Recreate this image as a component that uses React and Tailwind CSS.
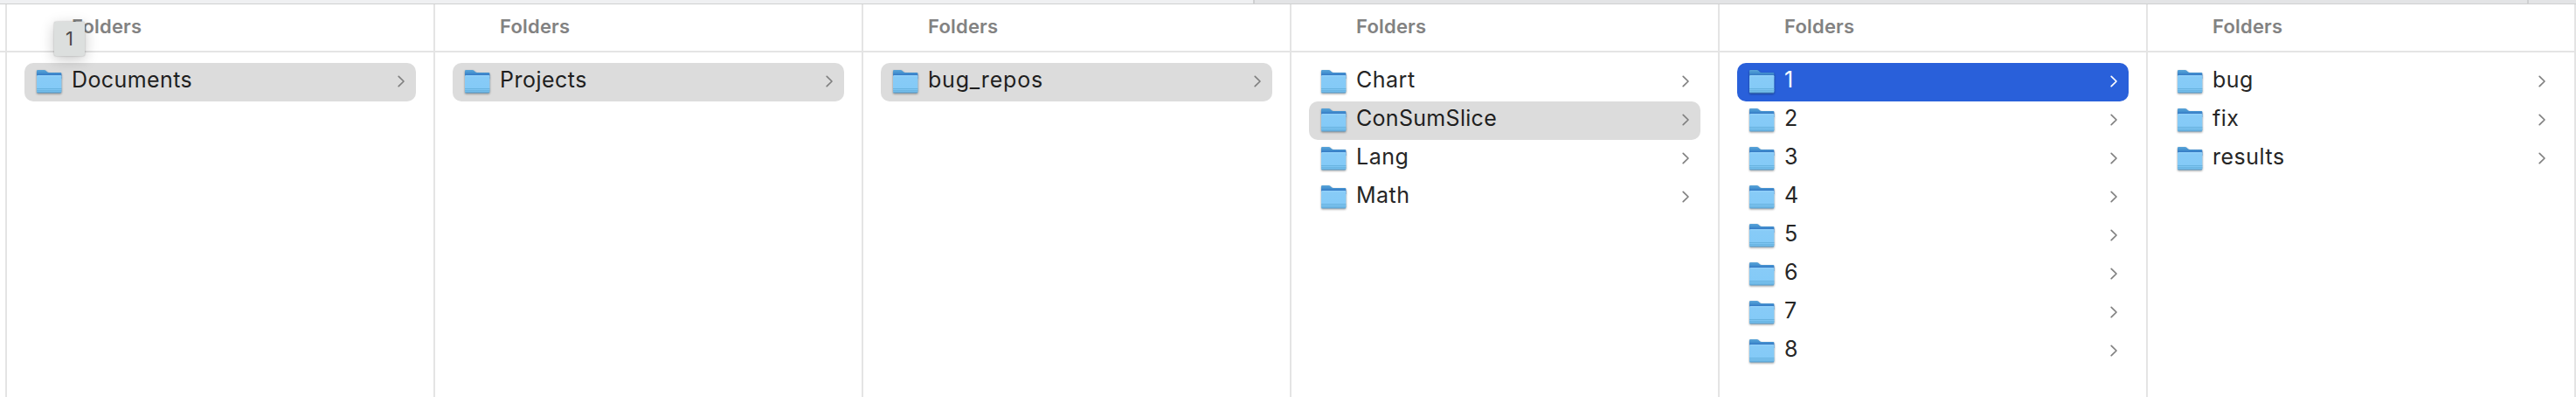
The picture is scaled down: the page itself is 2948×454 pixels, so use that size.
const columns = [
  { items: ['Documents'], selected: 0 },
  { items: ['Projects'], selected: 0 },
  { items: ['bug_repos'], selected: 0 },
  { items: ['Chart', 'ConSumSlice', 'Lang', 'Math'], selected: 1 },
  { items: ['1', '2', '3', '4', '5', '6', '7', '8'], selected: 0, active: true },
  { items: ['bug', 'fix', 'results'], selected: -1 },
];

const tracking = {
  bug_repos: 'tracking-[0.8px]',
  ConSumSlice: 'tracking-[0.3px]',
  Documents: 'tracking-[0.4px]',
};

function FolderIcon() {
  return (
    <svg width="33" height="32" viewBox="0 0 33 32" className="block shrink-0 drop-shadow-[0_1px_1px_rgba(0,0,0,0.4)]">
      <defs>
        <linearGradient id="folder-back" gradientUnits="userSpaceOnUse" x1="0" y1="2" x2="0" y2="8">
          <stop offset="0" stopColor="#5aa5d9" />
          <stop offset="0.6" stopColor="#4390cf" />
          <stop offset="1" stopColor="#3579c4" />
        </linearGradient>
        <linearGradient id="folder-front" x1="0" y1="0" x2="0" y2="1">
          <stop offset="0" stopColor="#93d1fa" />
          <stop offset="0.12" stopColor="#87cbf7" />
          <stop offset="0.7" stopColor="#84caf7" />
          <stop offset="1" stopColor="#74bdea" />
        </linearGradient>
      </defs>
      <path d="M2 3.2Q2 2 3.2 2H10.6Q11.7 2 12.5 2.8L14 4.2Q14.8 5 16 5H29.2Q30.4 5 30.4 6.2V12H2Z" fill="url(#folder-back)" />
      <path d="M2 9.2Q2 8 3.2 8H29.2Q30.4 8 30.4 9.2V27Q30.4 28.2 29.2 28.2H3.2Q2 28.2 2 27Z" fill="url(#folder-front)" />
      <path d="M2 23.5H30.4M2 25.7H30.4" stroke="#62addb" strokeWidth="0.8" />
      <path d="M2.4 27.8H30" stroke="#5197c6" strokeWidth="0.8" />
    </svg>
  );
}

function Row({ label, selected, active }) {
  const tone = selected ? (active ? 'bg-[#2960da] text-white' : 'bg-[#dcdcdc] text-[#1f1f1f]') : 'text-[#262626]';
  return (
    <li className={`flex h-11 items-center rounded-[10px] pl-3 pr-3 ${tone}`}>
      <FolderIcon />
      <span className={`grow pb-1.5 pl-[9px] text-[25px] leading-[38px] ${tracking[label] || 'tracking-[0.5px]'}`}>{label}</span>
      <svg width="10" height="16" viewBox="0 0 10 16" className={`mb-0.5 block shrink-0 ${selected && active ? 'text-white' : 'text-[#808080]'}`}>
        <path d="M2.2 2.4L8 8L2.2 13.6" fill="none" stroke="currentColor" strokeWidth="1.7" strokeLinecap="round" strokeLinejoin="round" />
      </svg>
    </li>
  );
}

function Column({ items, selected, active, badge }) {
  return (
    <section className="w-[490px] shrink-0 border-r-2 border-[#e4e4e4]">
      <header className="relative h-[55px] border-b-2 border-[#e4e4e4] pl-[74px]">
        <h2 className="text-[22px] font-semibold leading-[50px] tracking-[0.2px] text-[#828282]">Folders</h2>
        {badge && (
          <span className="absolute left-[54px] top-5 h-[39px] w-[35px] rounded-[2px] bg-[#dcdfde] text-center text-[22px] leading-[38px] text-[#4a4a4a] shadow-[0_4px_16px_rgba(0,0,0,0.22),0_0_2px_rgba(0,0,0,0.3)]">{badge}</span>
        )}
      </header>
      <ul className="px-5 pt-3">
        {items.map((label, i) => (
          <Row key={label} label={label} selected={i === selected} active={active} />
        ))}
      </ul>
    </section>
  );
}

export default function App() {
  return (
    <main className="flex h-[454px] w-[2948px] flex-col overflow-hidden bg-white font-['Inter',sans-serif]">
      <div className="flex h-[5px] shrink-0 border-b border-[#cfd0d1] bg-[#e3e4e6]">
        <div className="w-[1436px] border-r-2 border-[#cfd0d1] bg-[#eff0f2]" />
        <div className="w-[1458px] border-r-2 border-[#cfd0d1]" />
      </div>
      <div className="flex grow">
        <div className="w-2 shrink-0 border-r-2 border-[#e4e4e4]">
          <div className="h-[55px] border-b-2 border-[#e4e4e4]" />
        </div>
        {columns.map((column, i) => (
          <Column key={i} {...column} badge={i === 0 ? '1' : null} />
        ))}
      </div>
    </main>
  );
}
